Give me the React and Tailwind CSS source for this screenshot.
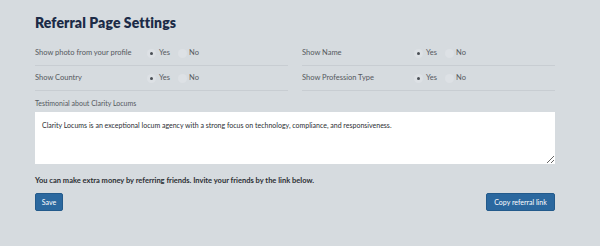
import React from 'react';

const Radio = ({ checked }) => (
  <span className="w-[9px] h-[9px] rounded-full bg-[#dde1e5] flex items-center justify-center">
    {checked && <span className="w-[3px] h-[3px] rounded-full bg-[#4a4f55]" />}
  </span>
);

const SettingRow = ({ label }) => (
  <div className="flex items-center h-[25px] border-b border-[#c8cdd2]">
    <span className="w-[112px] text-[7.5px] text-[#55595e]">{label}</span>
    <div className="flex items-center text-[7.5px] text-[#55595e]">
      <Radio checked />
      <span className="ml-[3px]">Yes</span>
      <span className="ml-[8px]">
        <Radio />
      </span>
      <span className="ml-[2px]">No</span>
    </div>
  </div>
);

export default function App() {
  return (
    <div
      className="w-[600px] h-[246px] bg-[#d6dbdf] pl-[35px] pt-[13px]"
      style={{ fontFamily: 'Lato, "Liberation Sans", sans-serif' }}
    >
      <div className="w-[520px]">
        {/* Header */}
        <h1 className="text-[14px] leading-[20px] font-extrabold text-[#1c2b47] tracking-[0.1px]">
          Referral Page Settings
        </h1>

        {/* Toggles */}
        <div className="grid grid-cols-2 gap-x-[14px] mt-[8px]">
          <SettingRow label="Show photo from your profile" />
          <SettingRow label="Show Name" />
          <SettingRow label="Show Country" />
          <SettingRow label="Show Profession Type" />
        </div>

        {/* Testimonial */}
        <div className="mt-[7px] text-[7px] leading-[10px] text-[#55595e]">Testimonial about Clarity Locums</div>
        <textarea
          className="mt-[4px] block w-[520px] h-[52px] bg-white px-[7px] py-[8px] text-[7px] leading-[10px] text-[#2b2e33] resize-y outline-none"
          defaultValue="Clarity Locums is an exceptional locum agency with a strong focus on technology, compliance, and responsiveness."
        />

        <p className="mt-[12px] text-[7.5px] leading-[10px] font-bold text-[#2b2e33]">
          You can make extra money by referring friends. Invite your friends by the link below.
        </p>

        <div className="flex justify-between mt-[7px]">
          <button className="h-[18px] w-[28px] rounded-[2px] bg-[#2b689f] border border-[#235a8b] text-white text-[7px]">
            Save
          </button>
          <button className="h-[18px] w-[69px] rounded-[2px] bg-[#2b689f] border border-[#235a8b] text-white text-[7px]">
            Copy referral link
          </button>
        </div>
      </div>
    </div>
  );
}
